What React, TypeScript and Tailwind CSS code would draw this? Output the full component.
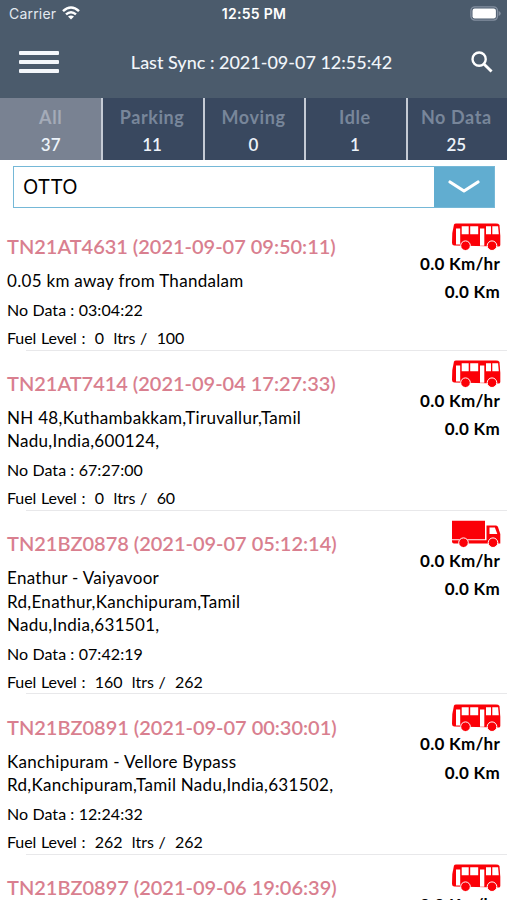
import { useState } from 'react';
import clsx from 'clsx';

type VehicleType = 'bus' | 'truck';

interface Vehicle {
  number: string;
  time: string;
  type: VehicleType;
  details?: {
    address: string[];
    noData: string;
    fuel: string;
    capacity: string;
  };
}

const TABS = [
  { label: 'All', count: 37 },
  { label: 'Parking', count: 11 },
  { label: 'Moving', count: 0 },
  { label: 'Idle', count: 1 },
  { label: 'No Data', count: 25 },
];

const VEHICLES: Vehicle[] = [
  {
    number: 'TN21AT4631',
    time: '2021-09-07 09:50:11',
    type: 'bus',
    details: { address: ['0.05 km away from Thandalam'], noData: '03:04:22', fuel: '0', capacity: '100' },
  },
  {
    number: 'TN21AT7414',
    time: '2021-09-04 17:27:33',
    type: 'bus',
    details: { address: ['NH 48,Kuthambakkam,Tiruvallur,Tamil', 'Nadu,India,600124,'], noData: '67:27:00', fuel: '0', capacity: '60' },
  },
  {
    number: 'TN21BZ0878',
    time: '2021-09-07 05:12:14',
    type: 'truck',
    details: { address: ['Enathur - Vaiyavoor', 'Rd,Enathur,Kanchipuram,Tamil', 'Nadu,India,631501,'], noData: '07:42:19', fuel: '160', capacity: '262' },
  },
  {
    number: 'TN21BZ0891',
    time: '2021-09-07 00:30:01',
    type: 'bus',
    details: { address: ['Kanchipuram - Vellore Bypass', 'Rd,Kanchipuram,Tamil Nadu,India,631502,'], noData: '12:24:32', fuel: '262', capacity: '262' },
  },
  { number: 'TN21BZ0897', time: '2021-09-06 19:06:39', type: 'bus' },
];

function BusIcon() {
  return (
    <svg viewBox="0 0 50 28" className="h-7 w-[50px]">
      <path d="M3 1.5 Q3.500 .7 5 .6 L45 .6 Q47.500 .6 48.500 2 L49.300 13 L49.300 22 Q49.200 23.500 47.500 23.500 L3 22.500 Q1 22 1 20 L1.300 10 Z" fill="#fb0007" />
      <path d="M5 5.500h4.200v16H5zM29 5.500h4.300v17.200H29z" fill="#fff" />
      <path d="M10.700 3.300h7v8h-7zM19.200 3.300h8v8h-8zM35 3.300h5v8h-5zM41.300 3.300h5.800l.7 8h-6.500z" fill="#fff" />
      <g fill="#fb0007" stroke="#fff" strokeWidth="1">
        <circle cx="14.500" cy="22.700" r="4.800" />
        <circle cx="41" cy="22.700" r="4.800" />
      </g>
    </svg>
  );
}

function TruckIcon() {
  return (
    <svg viewBox="0 0 50 28" className="h-7 w-[50px]">
      <path d="M1 .8h33v18.400H1zM1 20.300h34.500V5.500h9.500q1.500 0 2 1.500l2.300 7v9.500H3q-2 0-2-2z" fill="#fb0007" />
      <path d="M38.500 7.500h5.400l2.400 6.500h-7.800z" fill="#fff" />
      <g fill="#fb0007" stroke="#fff" strokeWidth="1">
        <circle cx="12.500" cy="22.700" r="4.800" />
        <circle cx="42" cy="22.700" r="4.800" />
      </g>
    </svg>
  );
}

function StatusBar() {
  return (
    <div className="grid h-[26px] grid-cols-3 items-center pl-[9px] pr-[6px] font-['Inter',sans-serif] text-[14px]">
      <div className="flex items-center gap-1.5 text-[#e3e9f0]">
        <span className="tracking-[0.2px]">Carrier</span>
        <svg viewBox="0 0 18 14" className="h-3.5 w-[18px]" fill="none" stroke="#fff" strokeWidth="2.500">
          <path d="M1 5.200Q9-2.200 17 5.200M4 8.400Q9 4 14 8.400" />
          <path d="M6 10.500Q9 8.300 12 10.500L9 13.500Z" fill="#fff" stroke="none" />
        </svg>
      </div>
      <span className="pr-0.5 text-center font-semibold tracking-[0.3px]">12:55 PM</span>
      <svg viewBox="0 0 31 15" className="h-[15px] w-[31px] justify-self-end">
        <rect x=".9" y=".9" width="26.600" height="13.200" rx="4" fill="none" stroke="#8490a0" strokeWidth="1.400" />
        <rect x="2.500" y="2.500" width="23.400" height="10" rx="2.200" fill="#fff" />
        <path d="M28.700 5q2 .8 2 2.500t-2 2.500z" fill="#8490a0" />
      </svg>
    </div>
  );
}

function Header() {
  return (
    <header className="h-[98px] bg-[#4b5b6c] text-white">
      <StatusBar />
      <div className="flex h-[72px] items-center justify-between pl-[19px] pr-[14px]">
        <button className="flex w-10 flex-col gap-[5px]">
          <span className="h-1 rounded-[1px] bg-[#f4f7fb]" />
          <span className="h-1 rounded-[1px] bg-[#f4f7fb]" />
          <span className="h-1 rounded-[1px] bg-[#f4f7fb]" />
        </button>
        <h1 className="pr-[7px] text-[18px] font-medium text-[#f1f5fa]">Last Sync : 2021-09-07 12:55:42</h1>
        <button>
          <svg viewBox="0 0 23 23" className="size-[22px]" fill="none" stroke="#fff" strokeWidth="2.500">
            <circle cx="8.500" cy="8.500" r="6.900" />
            <path d="M13.500 13.500L21.500 21.500" strokeWidth="3" />
          </svg>
        </button>
      </div>
    </header>
  );
}

function VehicleRow({ vehicle }: { vehicle: Vehicle }) {
  const { details } = vehicle;

  return (
    <li>
      <div className="flex justify-between pl-[7px] pr-[6px] pt-[20.5px]">
        <div className="whitespace-pre text-black">
          <h2 className="text-[20px] font-semibold leading-6 tracking-[-0.02px] text-[#d97f8f]">
            {vehicle.number} ({vehicle.time})
          </h2>
          {details && (
            <>
              <div className="mt-[11px] text-[17px] leading-[23.2px] tracking-[0.3px]">
                {details.address.map((line) => (
                  <p key={line}>{line}</p>
                ))}
              </div>
              <p className="mt-[3.5px] text-[16px] leading-7 tracking-[0.08px]">No Data : {details.noData}</p>
              <p className="text-[16px] leading-[28.4px] tracking-[-0.08px] [word-spacing:0.7px]">
                {`Fuel Level :  ${details.fuel}  ltrs /  ${details.capacity}`}
              </p>
            </>
          )}
        </div>
        <div className="-mt-[11px] flex flex-col items-end text-[17px] font-bold leading-[28.5px] tracking-[0.25px]">
          {vehicle.type === 'bus' ? <BusIcon /> : <TruckIcon />}
          <span className="-mt-[1.5px] pr-px">0.0 Km/hr</span>
          <span className="pr-px">0.0 Km</span>
        </div>
      </div>
      {details && <div className="-mt-[2.5px] ml-[26px] h-px bg-[#e8e8ea]" />}
    </li>
  );
}

export default function App() {
  const [active, setActive] = useState('All');

  return (
    <div className="h-[900px] w-[507px] overflow-hidden bg-white font-['Lato',sans-serif]">
      <Header />
      <nav className="grid h-[62px] grid-cols-5 bg-[#39485f]">
        {TABS.map((tab) => (
          <button
            key={tab.label}
            onClick={() => setActive(tab.label)}
            className={clsx(
              'flex flex-col items-center border-l-2 border-[#c5cbd5] pr-0.5 pt-[5px] first:border-l-0 first:pr-0',
              active === tab.label && 'bg-[#798292]',
            )}
          >
            <span className={clsx('text-[18px] font-bold leading-7 tracking-[0.6px]', active === tab.label ? 'text-[#a4abb8]' : 'text-[#78869a]')}>
              {tab.label}
            </span>
            <span className="text-[17px] font-semibold leading-7 text-[#edf3fa]">{tab.count}</span>
          </button>
        ))}
      </nav>

      <div className="ml-[13px] mr-3 mt-[6px] flex h-[42px] border border-[#75b8d7]">
        <div className="flex-1 pl-[9px] font-['Inter',sans-serif] text-[20px] leading-[41px] tracking-[-0.2px]">OTTO</div>
        <button className="flex w-[60px] items-center justify-center bg-[#61add0]">
          <svg viewBox="0 0 32 14" className="h-3.5 w-8" fill="none" stroke="#fff" strokeWidth="3.200" strokeLinecap="round" strokeLinejoin="round">
            <path d="M2 2L16 11L30 2" />
          </svg>
        </button>
      </div>

      <ul className="mt-[5.5px]">
        {VEHICLES.map((vehicle) => (
          <VehicleRow key={vehicle.number} vehicle={vehicle} />
        ))}
      </ul>
    </div>
  );
}
